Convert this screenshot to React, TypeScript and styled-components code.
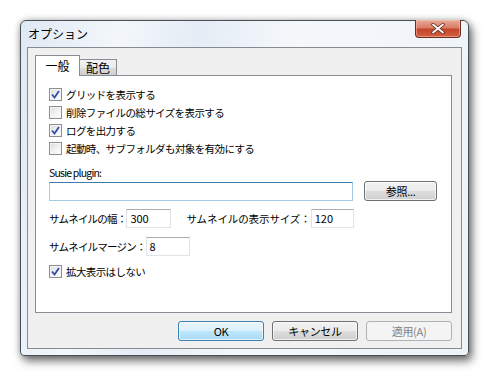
import styled, { createGlobalStyle } from "styled-components";

const GlobalStyle = createGlobalStyle`
  html, body {
    margin: 0;
    padding: 0;
    background: #fff;
  }
  body {
    font-family: "Noto Sans CJK JP", "Noto Sans", sans-serif;
    font-size: 11px;
    color: #000;
  }
`;

type CheckItem = {
  label: string;
  checked: boolean;
};

const generalChecks: CheckItem[] = [
  { label: "グリッドを表示する", checked: true },
  { label: "削除ファイルの総サイズを表示する", checked: false },
  { label: "ログを出力する", checked: true },
  { label: "起動時、サブフォルダも対象を有効にする", checked: false },
];

const CheckBox = ({ label, checked }: CheckItem) => (
  <CheckRow>
    <Box>
      {checked && (
        <svg width="9" height="9" viewBox="0 0 9 9">
          <path d="M1 4.5 L3.5 7.5 L8 1" fill="none" stroke="#2e4fa3" strokeWidth="1.8" />
        </svg>
      )}
    </Box>
    <CheckLabel>{label}</CheckLabel>
  </CheckRow>
);

const App = () => {
  return (
    <Page>
      <GlobalStyle />
      <Window>
        <TitleBar>
          <Title>オプション</Title>
          <CloseButton>
            <svg width="14" height="11" viewBox="0 0 14 11">
              <path d="M2 1.5 L12 9.5 M12 1.5 L2 9.5" stroke="#5b2a22" strokeWidth="3.4" strokeLinecap="round" />
              <path d="M2 1.5 L12 9.5 M12 1.5 L2 9.5" stroke="#fff" strokeWidth="1.8" strokeLinecap="round" />
            </svg>
          </CloseButton>
        </TitleBar>
        <Client>
          <TabStrip>
            <Tab $active>一般</Tab>
            <Tab>配色</Tab>
          </TabStrip>
          <Panel>
            <CheckList>
              {generalChecks.map((item) => (
                <CheckBox key={item.label} {...item} />
              ))}
            </CheckList>
            <Row $top={11}>
              <Label>Susie plugin:</Label>
            </Row>
            <Row $top={1} $gap={11}>
              <TextField $focused $width={306} />
              <PushButton $width={73}>参照...</PushButton>
            </Row>
            <Row $top={8}>
              <Label>サムネイルの幅：</Label>
              <TextField $width={45}>300</TextField>
              <Spacer />
              <Label $tracking={-0.1}>サムネイルの表示サイズ：</Label>
              <TextField $width={43}>120</TextField>
            </Row>
            <Row $top={9}>
              <Label>サムネイルマージン：</Label>
              <TextField $width={44}>8</TextField>
            </Row>
            <Row $top={9}>
              <CheckBox label="拡大表示はしない" checked />
            </Row>
          </Panel>
          <ButtonBar>
            <PushButton $width={86} $variant="default">OK</PushButton>
            <PushButton $width={86}>キャンセル</PushButton>
            <PushButton $width={86} $variant="disabled">適用(A)</PushButton>
          </ButtonBar>
        </Client>
      </Window>
    </Page>
  );
};

const Page = styled.div`
  width: 492px;
  height: 379px;
  padding: 20px 0 0 20px;
  box-sizing: border-box;
`;

const Window = styled.div`
  width: 449px;
  height: 336px;
  box-sizing: border-box;
  border: 1px solid #4a4f55;
  border-radius: 6px 6px 4px 4px;
  background: linear-gradient(100deg, #dfe9f4 0%, #f3f7fb 20%, #e4ecf5 35%, #f5f8fb 55%, #eef3f8 100%);
  box-shadow: 3px 5px 10px rgba(0, 0, 0, 0.55), 0 0 6px rgba(0, 0, 0, 0.25);
  display: flex;
  flex-direction: column;
`;

const TitleBar = styled.div`
  height: 26px;
  display: flex;
  justify-content: space-between;
  align-items: flex-start;
  padding: 0 7px 0 7px;
`;

const Title = styled.span`
  font-size: 12px;
  line-height: 12px;
  margin-top: 7px;
  color: #000;
`;

const CloseButton = styled.div`
  width: 46px;
  height: 18px;
  margin-top: -1px;
  box-sizing: border-box;
  border: 1px solid #6b2b1e;
  border-top: none;
  border-radius: 0 0 4px 4px;
  background: linear-gradient(180deg, #e9ab9b 0%, #d97c66 45%, #c4452b 55%, #d2603f 100%);
  display: flex;
  align-items: center;
  justify-content: center;
  box-shadow: inset 0 0 0 1px rgba(255, 200, 180, 0.5);
`;

const Client = styled.div`
  flex: 1;
  margin: 0 6px 6px 6px;
  border: 1px solid #878a8f;
  background: #f0f0f0;
  padding: 7px 9px 0 7px;
  display: flex;
  flex-direction: column;
`;

const TabStrip = styled.div`
  display: flex;
  align-items: flex-end;
  height: 21px;
  position: relative;
  z-index: 1;
  margin-bottom: -1px;
`;

const Tab = styled.div<{ $active?: boolean }>`
  box-sizing: border-box;
  height: ${(p) => (p.$active ? "21px" : "17px")};
  padding: 0 ${(p) => (p.$active ? "9px" : "4px")};
  border: 1px solid #898c95;
  border-bottom: ${(p) => (p.$active ? "none" : "1px solid #898c95")};
  border-left: ${(p) => (p.$active ? "1px solid #898c95" : "none")};
  background: ${(p) =>
    p.$active ? "#fff" : "linear-gradient(180deg, #f2f2f2 0%, #ebebeb 50%, #dddddd 51%, #cfcfcf 100%)"};
  font-size: 12px;
  line-height: ${(p) => (p.$active ? "19px" : "15px")};
  min-width: ${(p) => (p.$active ? "45px" : "37px")};
  text-align: center;
`;

const Panel = styled.div`
  height: 238px;
  box-sizing: border-box;
  border: 1px solid #898c95;
  background: #fff;
  padding: 12px 14px 0 13px;
  display: flex;
  flex-direction: column;
`;

const CheckList = styled.div`
  display: flex;
  flex-direction: column;
  gap: 5px;
`;

const CheckRow = styled.div`
  display: flex;
  align-items: center;
  gap: 4px;
  height: 13px;
`;

const Box = styled.div`
  width: 13px;
  height: 13px;
  box-sizing: border-box;
  border: 1px solid #8f8f8f;
  background: linear-gradient(135deg, #dcdcdc 0%, #f4f4f4 60%, #ffffff 100%);
  box-shadow: inset 0 0 0 1px #f4f4f4;
  display: flex;
  align-items: center;
  justify-content: center;
`;

const CheckLabel = styled.span`
  font-size: 10.5px;
  line-height: 13px;
  letter-spacing: -0.6px;
  white-space: nowrap;
`;

const Label = styled.span<{ $tracking?: number }>`
  font-size: 10.5px;
  line-height: 14px;
  letter-spacing: ${(p) => p.$tracking ?? -0.8}px;
  white-space: nowrap;
`;

const Row = styled.div<{ $top: number; $gap?: number }>`
  display: flex;
  align-items: center;
  margin-top: ${(p) => p.$top}px;
  gap: ${(p) => p.$gap ?? 0}px;
`;

const Spacer = styled.div`
  width: 15px;
`;

const TextField = styled.div<{ $width: number; $focused?: boolean }>`
  width: ${(p) => p.$width}px;
  height: 19px;
  box-sizing: border-box;
  border: 1px solid ${(p) => (p.$focused ? "#a4c9e3" : "#e2e3ea")};
  border-top-color: ${(p) => (p.$focused ? "#3d7bad" : "#abadb3")};
  background: #fff;
  font-size: 11px;
  line-height: 17px;
  padding-left: 3px;
`;

const ButtonBar = styled.div`
  display: flex;
  justify-content: flex-end;
  gap: 8px;
  margin-top: 8px;
`;

const PushButton = styled.div<{ $width: number; $variant?: "default" | "disabled" }>`
  width: ${(p) => p.$width}px;
  height: 20px;
  box-sizing: border-box;
  border: 1px solid
    ${(p) => (p.$variant === "default" ? "#3c7fb1" : p.$variant === "disabled" ? "#adb2b5" : "#707070")};
  border-radius: 3px;
  background: ${(p) =>
    p.$variant === "default"
      ? "linear-gradient(180deg, #eaf6fd 0%, #d9f0fc 50%, #bee6fd 51%, #a7d9f5 100%)"
      : p.$variant === "disabled"
      ? "#f4f4f4"
      : "linear-gradient(180deg, #f2f2f2 0%, #ebebeb 50%, #dddddd 51%, #cfcfcf 100%)"};
  box-shadow: inset 0 0 0 1px ${(p) => (p.$variant === "disabled" ? "#f4f4f4" : "rgba(255,255,255,0.7)")};
  color: ${(p) => (p.$variant === "disabled" ? "#838383" : "#000")};
  font-size: 11px;
  line-height: 18px;
  text-align: center;
  letter-spacing: -0.3px;
`;

export default App;
